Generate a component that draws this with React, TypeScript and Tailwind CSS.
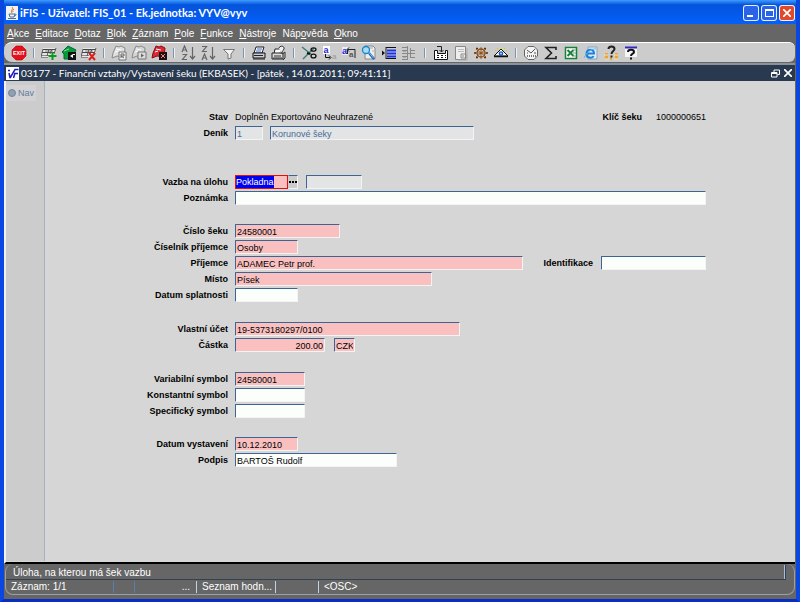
import { useState } from 'react';
import type { ReactNode } from 'react';

const menuItems = [
  ['', 'A', 'kce'],
  ['', 'E', 'ditace'],
  ['', 'D', 'otaz'],
  ['', 'B', 'lok'],
  ['', 'Z', 'áznam'],
  ['', 'P', 'ole'],
  ['', 'F', 'unkce'],
  ['', 'N', 'ástroje'],
  ['Náp', 'o', 'věda'],
  ['', 'O', 'kno'],
];

function Icon({ children }: { children: ReactNode }) {
  return (
    <svg viewBox="0 0 16 16" className="w-4 h-4 shrink-0" fill="none" aria-hidden="true">
      {children}
    </svg>
  );
}

// grey record strip shared by the insert / delete icons
function RecordStrip() {
  return (
    <>
      <path d="M2 3h13l-2 9H0z" fill="#e8e8e8" />
      <path d="M2 4.500h13M1 7.500h13" stroke="#444" />
      <path d="M1 10.500h7M0 12.500h7M4 6h8" stroke="#888" />
      <path d="M2 4L0 12M8 4L6 11M11 4l-2 5M15 3l-2 6" stroke="#555" />
    </>
  );
}

// tilted card shared by the query icons
function Card({ color, edge }: { color: string; edge: string }) {
  return (
    <>
      <path d="M5 1l3 1 2-1 4 2-1 9-7-1-5 2 1-5z" fill={color} stroke={edge} />
      <path d="M5 4l5 1M4 7l3-1" stroke="#fff" />
    </>
  );
}

const icons: Record<string, ReactNode> = {
  exit: (
    <>
      <path d="M5 1h6l4 4v6l-4 4H5l-4-4V5z" fill="#e4101c" stroke="#b00" strokeWidth=".6" />
      <text x="8" y="10.200" textAnchor="middle" fontSize="5.500" fontWeight="bold" fill="#fff">EXIT</text>
    </>
  ),
  insert: (
    <>
      <RecordStrip />
      <path d="M11.500 7v8M7.500 11h8" stroke="#0a9a1e" strokeWidth="2" />
    </>
  ),
  save: (
    <>
      <path d="M1 7l6-6 8 4-1 2v7H3V9z" fill="#079b35" stroke="#064" />
      <path d="M3 6l5-2" stroke="#8fe0a0" />
      <path d="M7 7h8v8H7z" fill="#111" />
      <path d="M9 11l3-2v4zM12 9h2v1h-2z" fill="#fff" />
    </>
  ),
  remove: (
    <>
      <RecordStrip />
      <path d="M8 8l6 7M14 8l-6 7" stroke="#d8201c" strokeWidth="2" />
    </>
  ),
  query: (
    <>
      <Card color="#e0e0e0" edge="#8a8a8a" />
      <path d="M8 7h7v8H8z" fill="#eee" stroke="#777" />
      <path d="M10 13V9h3v2h-3l3 2" stroke="#666" />
    </>
  ),
  run: (
    <>
      <Card color="#d6d6d6" edge="#8a8a8a" />
      <path d="M7 7h8v7H7z" fill="#ddd" stroke="#777" />
      <path d="M10 8.500l3 2-3 2z" fill="#666" />
    </>
  ),
  cancel: (
    <>
      <Card color="#dd2630" edge="#7a1016" />
      <path d="M8 7h8v8H8z" fill="#1b1111" />
      <path d="M10 9l4 4M14 9l-4 4" stroke="#ff8585" />
    </>
  ),
  sortAsc: (
    <path d="M1 7l2.500-6L6 7M2 5h3M1.500 9.500h4l-4 5h4.500M11.500 2v12M9 11l2.500 3 2.500-3" stroke="#666" strokeWidth="1.200" />
  ),
  sortDesc: (
    <path d="M1 1.500h4.500l-4 5H6M1 15l2.500-6L6 15M2 13h3M11.500 2v12M9 11l2.500 3 2.500-3" stroke="#666" strokeWidth="1.200" />
  ),
  filter: <path d="M2.500 4.500h11L10 9v4l-3 1V9z" fill="#f2f2f2" stroke="#777" />,
  print: (
    <>
      <path d="M5 2h8l-2 6H3z" fill="#fff" stroke="#222" />
      <path d="M6 4h5M5 6h5" stroke="#4169c8" />
      <path d="M2 8h12v5H2z" fill="#c9cdd8" stroke="#111" />
      <path d="M2 14h12M3 10.500h9" stroke="#222" />
    </>
  ),
  preview: (
    <>
      <path d="M4 4h6l-1 5H3z" fill="#fff" stroke="#222" />
      <path d="M1 8h11v6H1z" fill="#ddd" stroke="#222" />
      <path d="M3 11h7M2 13h9M11 9l3-2v6l-2 2" stroke="#333" />
      <path d="M8 3c1-3 6-2 5 1s-3 2-3 5" stroke="#333" fill="#eee" />
    </>
  ),
  cut: (
    <>
      <path d="M1 2l10 8M2 14L13 3" stroke="#3b7f76" strokeWidth="1.500" />
      <path d="M6 8l3 1" stroke="#111" strokeWidth="2" />
      <ellipse cx="12.500" cy="4.500" rx="2.500" ry="1.700" stroke="#111" strokeWidth="1.300" />
      <ellipse cx="12.500" cy="11" rx="2.500" ry="1.900" stroke="#111" strokeWidth="1.300" />
    </>
  ),
  copy: (
    <>
      <path d="M2 1h7v8H2z" fill="#fff" />
      <text x="2.500" y="7.500" fontSize="9" fontWeight="bold" fill="#2424d8">a</text>
      <path d="M4.500 9v3.500H9M8 10.500l2 2-2 2" stroke="#111" />
      <text x="11" y="14" fontSize="8" fill="#999">a</text>
    </>
  ),
  paste: (
    <>
      <path d="M1 2h6v8H1z" fill="#eee" />
      <text x="1" y="9" fontSize="9" fontWeight="bold" fill="#2424d8">a</text>
      <path d="M6.500 9V4.500H14V13M8 2.500l-2 2 2 2" stroke="#222" />
      <text x="8" y="12" fontSize="8" fontWeight="bold" fill="#555">a</text>
    </>
  ),
  find: (
    <>
      <path d="M4 1h8l2 2v11H4z" fill="#eee" stroke="#888" />
      <path d="M8 3h4M11 6h2M10 12h3" stroke="#aaa" />
      <circle cx="5" cy="5" r="3.500" fill="#a9dcf6" stroke="#1586c8" strokeWidth="1.300" />
      <path d="M8 8l5 6" stroke="#1467bc" strokeWidth="2.300" />
      <path d="M8.500 8l4 5" stroke="#a5d7fa" strokeWidth=".7" />
    </>
  ),
  listAdd: (
    <>
      <path d="M5 2.500h10M5 13.500h10" stroke="#111" />
      <path d="M6 5.500h9M6 8.500h9M6 11.500h9" stroke="#1c34e8" strokeWidth="2" />
      <path d="M1 5.500l3 2.500-3 2.500z" fill="#111" />
      <path d="M5 2v12" stroke="#222" />
    </>
  ),
  listTree: (
    <>
      <path d="M1 2.500h5M1 5.500h5M1 8.500h13M1 11.500h5M1 14.500h5M6.500 1v14M9.500 3v10M9 5.500h5M9 12.500h5" stroke="#888" />
      <path d="M2 6h3v1H2zM2 12h3v1H2z" fill="#aaa" />
    </>
  ),
  values: (
    <>
      <path d="M1.500 5.500h3v3h8v-3h2v9h-13z" fill="#fff" stroke="#111" />
      <path d="M4 1.500h4.500V7M6.500 5l2 2 2-2" stroke="#222" />
      <path d="M4 10h2v1H4zM8 10h2v1H8zM12 10h1v1h-1zM4 12h2v1H4zM8 12h2v1H8zM12 12h1v1h-1z" fill="#111" />
    </>
  ),
  form: (
    <>
      <path d="M2.500 1.500h10v13h-10z" fill="#eee" stroke="#888" />
      <path d="M5 4.500h6M5 6.500h6" stroke="#bbb" />
      <path d="M8 9h5v4H8zM9 11h2" stroke="#888" />
      <path d="M14 3v12H5" stroke="#aaa" />
    </>
  ),
  wheel: (
    <>
      <circle cx="8" cy="8" r="4" stroke="#8b4b16" strokeWidth="1.300" />
      <circle cx="8" cy="8" r="1.500" fill="#d48a38" />
      <path d="M8 2v12M2 8h12M3 4l10 8M13 4L3 12" stroke="#8b4b16" strokeWidth=".8" />
      <path d="M1 8h2M13 8h2M3 3.500h2M11 3.500h2M3 12.500h2M11 12.500h2" stroke="#623008" strokeWidth="1.300" />
    </>
  ),
  eye: (
    <>
      <path d="M8 2l7 10H1z" fill="#e8df55" />
      <path d="M8 4l7 7H1z" fill="#fff" stroke="#111" />
      <circle cx="8" cy="8.500" r="2.300" fill="#2450d0" />
      <circle cx="8" cy="8.500" r="1" fill="#7ae6ed" />
      <path d="M1 11.500h14" stroke="#111" strokeWidth="1.500" />
      <path d="M3 6L2 5M13 6l1-1M5 4L4 3M11 4l1-1" stroke="#d6c820" />
    </>
  ),
  clock: (
    <>
      <path d="M5 1.500h6l3.500 3.500v6L11 14.500H5L1.500 11V5z" fill="#f3f3f3" stroke="#666" />
      <path d="M4 5l4 3 4-4M4 8h1M11 8h2" stroke="#555" />
      <path d="M4 11h9" stroke="#777" strokeDasharray="1 1" strokeWidth="2" />
    </>
  ),
  sum: <path d="M13 5V2.500H3L8.500 8 3 13.500h10V11" stroke="#222" strokeWidth="1.600" />,
  excel: (
    <>
      <path d="M2.500 2.500h11v11h-11z" fill="#fff" stroke="#18803a" strokeWidth="1.500" />
      <path d="M4.500 5l6 6M10.500 5l-6 6" stroke="#18803a" strokeWidth="2" />
      <path d="M10 5h3M10 8h3M10 11h3" stroke="#69a97c" />
    </>
  ),
  browser: (
    <>
      <path d="M5 2h9v12H5z" fill="#dcebf8" stroke="#86a5c4" />
      <path d="M3 8.500h8c0-5-7-5-7.500 0s6 5 7 2.500" stroke="#1c82d8" strokeWidth="2" />
      <path d="M1 13C3 8 9 3 13 4" stroke="#65b7f0" />
    </>
  ),
  helpContext: (
    <>
      <path d="M2 8h3v6H2zM12 8h3v6h-3zM7 12h2v3H7z" fill="#e7a63c" />
      <path d="M1 10h4M11 10h4M2 14h4M11 14h4" stroke="#f6e3b4" />
      <path d="M5.500 4c0-3.500 6-3.500 6 0 0 2-3 2-3 5M8.500 10.500v2" stroke="#222" strokeWidth="2" />
    </>
  ),
  help: (
    <>
      <path d="M2 3h12v9H2z" fill="#f5f5f5" />
      <path d="M2 2.500h12" stroke="#3229c0" strokeWidth="2" />
      <path d="M5 7c0-3 6-3 6 0 0 2-3 1.500-3 4M8 12.500v2" stroke="#111" strokeWidth="2" />
    </>
  ),
};

const toolbar: { id: string; label: string }[][] = [
  [{ id: 'exit', label: 'Konec' }],
  [{ id: 'insert', label: 'Vložit záznam' }, { id: 'save', label: 'Uložit' }, { id: 'remove', label: 'Smazat záznam' }],
  [{ id: 'query', label: 'Zadat dotaz' }, { id: 'run', label: 'Provést dotaz' }, { id: 'cancel', label: 'Zrušit dotaz' }],
  [{ id: 'sortAsc', label: 'Třídit vzestupně' }, { id: 'sortDesc', label: 'Třídit sestupně' }, { id: 'filter', label: 'Filtr' }],
  [{ id: 'print', label: 'Tisk' }, { id: 'preview', label: 'Náhled' }],
  [
    { id: 'cut', label: 'Vyjmout' },
    { id: 'copy', label: 'Kopírovat' },
    { id: 'paste', label: 'Vložit' },
    { id: 'find', label: 'Hledat' },
    { id: 'listAdd', label: 'Seznam' },
    { id: 'listTree', label: 'Strom' },
  ],
  [{ id: 'values', label: 'Hodnoty' }, { id: 'form', label: 'Formulář' }, { id: 'wheel', label: 'Navigace' }, { id: 'eye', label: 'Zobrazit' }],
  [
    { id: 'clock', label: 'Čas' },
    { id: 'sum', label: 'Součet' },
    { id: 'excel', label: 'Excel' },
    { id: 'browser', label: 'Prohlížeč' },
    { id: 'helpContext', label: 'Kontextová nápověda' },
    { id: 'help', label: 'Nápověda' },
  ],
];

const tones = {
  white: 'bg-[#fcfefc] text-black',
  pink: 'bg-[#fac0c0] text-black',
  grey: 'bg-[#e2e4e6] text-[#4a6c98]',
};

interface FieldProps {
  id: string;
  width: string;
  label?: string;
  value?: string;
  tone?: keyof typeof tones;
  right?: boolean;
}

function Field({ id, width, label, value = '', tone = 'white', right }: FieldProps) {
  const [text, setText] = useState(value);
  return (
    <input
      id={id}
      aria-label={label}
      value={text}
      onChange={(e) => setText(e.target.value)}
      readOnly={tone === 'grey'}
      className={`${width} ${tones[tone]} ${right ? 'text-right' : ''} h-3.5 shrink-0 rounded-[1px] border border-t-[#3d6594] border-l-[#3d6594] border-r-[#f4f4f4] border-b-[#f4f4f4] px-px pt-px text-[9px] leading-3 outline-none`}
    />
  );
}

function Row({ id, label, children }: { id?: string; label: string; children: ReactNode }) {
  return (
    <div className="flex h-4 items-center">
      <label htmlFor={id} className="mr-[7px] w-[183px] shrink-0 text-right font-bold">
        {label}
      </label>
      {children}
    </div>
  );
}

function TitleBar() {
  return (
    <header className="flex h-6 items-center bg-linear-to-b from-[#3f9bff] via-[#0453dc] via-20% to-[#0560fa] pt-0.5 pr-px pl-0.5 text-white">
      <svg viewBox="0 0 12 14" className="mr-0.5 h-3.5 w-3 shrink-0" fill="none" aria-hidden="true">
        <path d="M0 0h12v14H0z" fill="#f0f2f6" />
        <path d="M6 1c2 2-2 3 0 6M8 3c-2 1-1 2-1 3" stroke="#e07818" />
        <path d="M3 8h6l-1 3H4zM9 8c2 0 1 2-1 2M2 12.500h8" stroke="#48709c" />
      </svg>
      <h1 className="flex-1 text-[11px] font-bold whitespace-nowrap [font-family:Lato,'Open_Sans',sans-serif]">
        iFIS - Uživatel: FIS_01 - Ek.jednotka: VYV@vyv
      </h1>
      <div className="flex gap-0.5">
        <button aria-label="Minimalizovat" className="flex h-4 w-4 items-end rounded-[3px] border border-white/90 bg-[#2a62e8] p-[3px]">
          <span className="h-0.5 w-1.5 bg-white" />
        </button>
        <button aria-label="Maximalizovat" className="flex h-4 w-4 items-center justify-center rounded-[3px] border border-white/90 bg-[#2a62e8]">
          <span className="h-2 w-[9px] border border-t-2 border-white" />
        </button>
        <button aria-label="Zavřít" className="flex h-4 w-4 items-center justify-center rounded-[3px] border border-white/90 bg-[#e0492a]">
          <svg viewBox="0 0 8 8" className="h-2 w-2" stroke="#fff" strokeWidth="1.700">
            <path d="M0 0l8 8M8 0L0 8" />
          </svg>
        </button>
      </div>
    </header>
  );
}

function StatusBar() {
  return (
    <footer className="bg-[#666] px-px pb-1 text-[10px] text-white">
      <div className="rounded-lg border border-t-0 border-[#9aa0aa]">
        <div className="mr-2 flex h-4 items-center border-b border-[#2f4152] pt-px pl-[7px]">
          <span className="flex-1">Úloha, na kterou má šek vazbu</span>
          <span className="h-3.5 w-0.5 border-l border-[#a9bfdb] bg-[#2f4152]" />
        </div>
        <div className="flex h-3.5 items-center leading-3">
          <span className="w-[107px] pl-[5px]">Záznam: 1/1</span>
          <span className="h-3 w-[21px] border-l border-[#5580b0]" />
          <span className="h-3 w-[62px] border-l border-[#5580b0] pr-1.5 text-right">...</span>
          <span className="h-3 w-[79px] border-l border-[#c0d2e8] pl-[5px]">Seznam hodn...</span>
          <span className="h-3 w-[43px] border-l border-[#c0d2e8]" />
          <span className="h-3 border-l border-[#c0d2e8] pl-[5px]">&lt;OSC&gt;</span>
        </div>
      </div>
    </footer>
  );
}

export default function App() {
  return (
    <div className="flex min-h-screen flex-col border-x-4 border-b-[3px] border-x-[#0a46e0] border-b-[#0a2cc0] bg-[#666] [font-family:'Liberation_Sans',Arial,sans-serif]">
      <TitleBar />

      {/* Menu */}
      <nav className="flex h-[18px] items-center gap-1.5 bg-[#666] pl-[3px] text-[10px] text-white">
        {menuItems.map(([before, key, after]) => (
          <button key={before + key + after} className="whitespace-nowrap">
            {before}
            <span className="underline">{key}</span>
            {after}
          </button>
        ))}
      </nav>

      {/* Toolbar */}
      <div className="mr-px flex h-5 items-center rounded-l-lg rounded-r-md border-t border-white bg-[#ccc] pl-[5px]">
        {toolbar.map((group, i) => (
          <div key={group[0].id} className="flex items-center">
            {i > 0 && (
              <span className={`${i === 6 ? 'w-3' : 'w-2.5'} flex justify-center`}>
                <span className="h-2.5 w-0.5 border-l border-[#7b93b5] bg-[#f0f0f0]" />
              </span>
            )}
            {group.map(({ id, label }) => (
              <button key={id} aria-label={label} title={label} className="flex w-5 justify-center">
                <Icon>{icons[id]}</Icon>
              </button>
            ))}
          </div>
        ))}
      </div>

      {/* Document title */}
      <div className="mr-px mt-px flex h-[18px] items-center border-t-2 border-t-[#8a929c] bg-[#293a50] pl-0.5 pr-[3px] text-white">
        <svg viewBox="0 0 13 13" className="mr-0.5 h-[13px] w-[13px] shrink-0" aria-hidden="true">
          <path d="M0 0h13v13H0z" fill="#fff" />
          <path d="M2 3.500h2M3 6l1 5M4 11l5-8.500h3.500M7.500 11l1.500-5M8 6.500h4" stroke="#1c1cc0" strokeWidth="1.500" fill="none" />
        </svg>
        <h2 className="flex-1 text-[10px] whitespace-nowrap [font-family:Lato,'Liberation_Sans',sans-serif]">
          03177 - Finanční vztahy/Vystavení šeku (EKBASEK) - [pátek , 14.01.2011; 09:41:11]
        </h2>
        <button aria-label="Obnovit okno" className="mr-1">
          <svg viewBox="0 0 9 9" className="h-[9px] w-[9px]" fill="none" stroke="#fff">
            <path d="M3 3V1h5.500v4.500H6.500M.5 3.500h5.500v4.500H.5zM.5 4.500H6" />
          </svg>
        </button>
        <button aria-label="Zavřít okno">
          <svg viewBox="0 0 8 8" className="h-2 w-2" stroke="#fff" strokeWidth="1.700">
            <path d="M0 0l8 8M8 0L0 8" />
          </svg>
        </button>
      </div>

      <main className="mr-px flex flex-1 border-b-2 border-l-2 border-b-black border-l-[#f2f2f2] bg-[#d6d6d6]">
        <aside className="mb-px w-[39px] shrink-0 border-r border-[#a3b3c6] bg-[#ccc] pt-1">
          <button className="flex items-center gap-0.5 bg-[#d4d2d4] px-0.5 text-[9px] leading-4 text-[#5f7d9e]">
            <span className="h-2 w-2 rounded-full border border-[#6f86a0] bg-[#91a0b0]" />
            Nav
          </button>
        </aside>

        <form className="flex-1 pt-7 text-[9px] leading-3 text-black">
          <Row label="Stav">
            <output className="w-[307px]">Doplněn Exportováno Neuhrazené</output>
            <span className="w-[100px] text-right font-bold">Klíč šeku</span>
            <output className="ml-3.5">1000000651</output>
          </Row>
          <Row id="denik" label="Deník">
            <Field id="denik" width="w-7" value="1" tone="grey" />
            <span className="w-[7px]" />
            <Field id="denikNazev" label="Název deníku" width="w-[204px]" value="Korunové šeky" tone="grey" />
          </Row>

          <div className="mt-[33px]">
            <Row id="vazba" label="Vazba na úlohu">
              <div className="flex h-3.5 w-[53px] items-center border border-[#e01010] bg-[#fac0c0]">
                <input
                  id="vazba"
                  defaultValue="Pokladna"
                  className="h-3 w-[38px] bg-[#0000f0] text-[9px] leading-3 text-white outline-none"
                />
              </div>
              <button type="button" aria-label="Seznam hodnot" className="mr-2 flex h-3.5 w-2.5 items-center justify-center gap-px border border-t-[#3d6594] border-r-[#f4f4f4] border-b-[#f4f4f4] border-l-[#ccc] bg-[#ccc]">
                <span className="h-0.5 w-0.5 bg-black" />
                <span className="h-0.5 w-0.5 bg-black" />
                <span className="h-0.5 w-0.5 bg-black" />
              </button>
              <Field id="vazbaCislo" label="Číslo vazby" width="w-14" tone="grey" />
            </Row>
            <Row id="poznamka" label="Poznámka">
              <Field id="poznamka" width="w-[471px]" />
            </Row>
          </div>

          <div className="mt-[17px]">
            <Row id="cislo" label="Číslo šeku">
              <Field id="cislo" width="w-[105px]" value="24580001" tone="pink" />
            </Row>
            <Row id="ciselnik" label="Číselník příjemce">
              <Field id="ciselnik" width="w-[63px]" value="Osoby" tone="pink" />
            </Row>
            <Row id="prijemce" label="Příjemce">
              <Field id="prijemce" width="w-[288px]" value="ADAMEC Petr prof." tone="pink" />
              <label htmlFor="identifikace" className="mr-2 w-[70px] shrink-0 text-right font-bold">
                Identifikace
              </label>
              <Field id="identifikace" width="w-[105px]" />
            </Row>
            <Row id="misto" label="Místo">
              <Field id="misto" width="w-[197px]" value="Písek" tone="pink" />
            </Row>
            <Row id="splatnost" label="Datum splatnosti">
              <Field id="splatnost" width="w-[63px]" />
            </Row>
          </div>

          <div className="mt-[18px]">
            <Row id="ucet" label="Vlastní účet">
              <Field id="ucet" width="w-[225px]" value="19-5373180297/0100" tone="pink" />
            </Row>
            <Row id="castka" label="Částka">
              <Field id="castka" width="w-[90px]" value="200.00" tone="pink" right />
              <span className="w-[9px]" />
              <Field id="mena" label="Měna" width="w-[21px]" value="CZK" tone="pink" />
            </Row>
          </div>

          <div className="mt-[18px]">
            <Row id="variabilni" label="Variabilní symbol">
              <Field id="variabilni" width="w-[70px]" value="24580001" tone="pink" />
            </Row>
            <Row id="konstantni" label="Konstantní symbol">
              <Field id="konstantni" width="w-[70px]" />
            </Row>
            <Row id="specificky" label="Specifický symbol">
              <Field id="specificky" width="w-[70px]" />
            </Row>
          </div>

          <div className="mt-[17px]">
            <Row id="vystaveni" label="Datum vystavení">
              <Field id="vystaveni" width="w-[63px]" value="10.12.2010" tone="pink" />
            </Row>
            <Row id="podpis" label="Podpis">
              <Field id="podpis" width="w-[162px]" value="BARTOŠ Rudolf" />
            </Row>
          </div>
        </form>
      </main>

      <StatusBar />
    </div>
  );
}
